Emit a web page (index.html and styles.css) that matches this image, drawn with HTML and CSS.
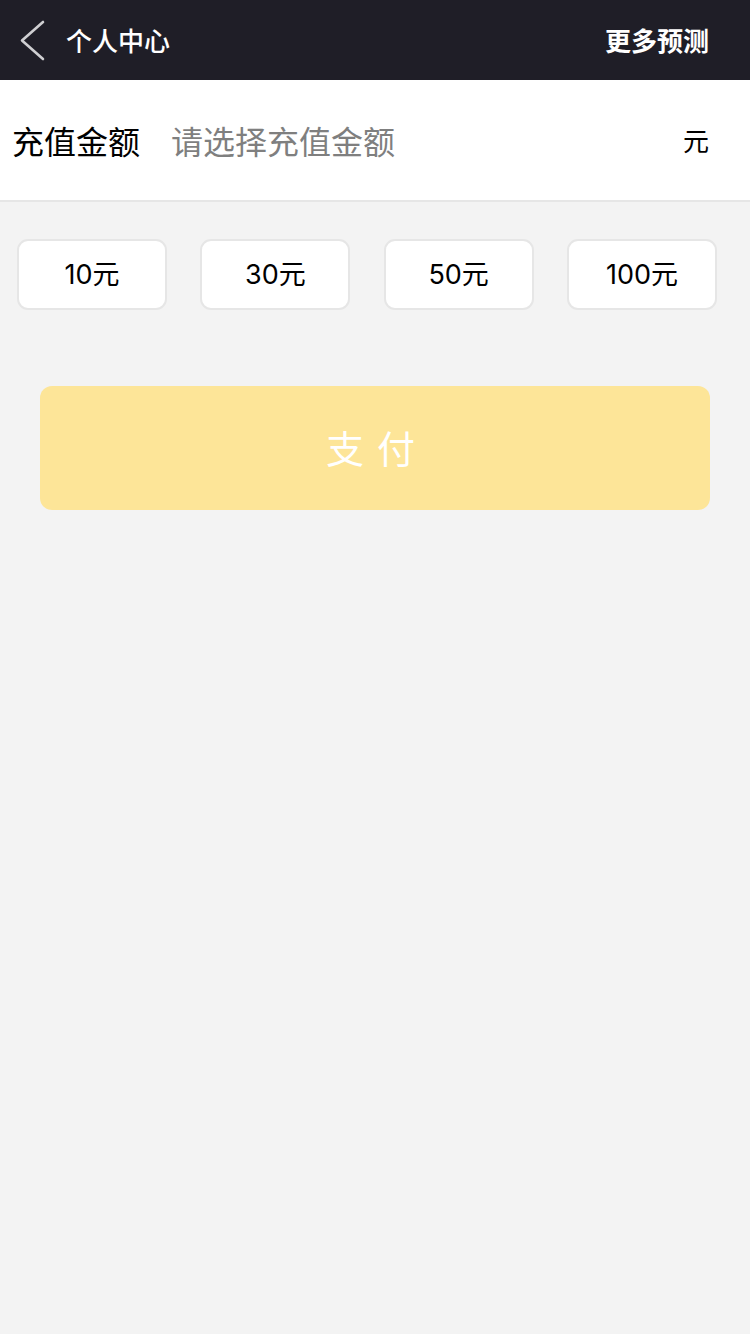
FILE: index.html
```html
<!DOCTYPE html>
<html lang="zh">
<head>
<meta charset="utf-8">
<title>充值</title>
<link rel="stylesheet" href="styles.css">
</head>
<body>
<header class="topbar">
  <div class="topbar-left">
    <svg class="back" width="30" height="44" viewBox="0 0 30 44"><polyline points="24,3 3,21.5 24,40" fill="none" stroke="#cfcfd2" stroke-width="2.6" stroke-linecap="round" stroke-linejoin="round"/></svg>
    <span class="title">个人中心</span>
  </div>
  <span class="more">更多预测</span>
</header>
<section class="amount-row">
  <span class="label">充值金额</span>
  <span class="placeholder">请选择充值金额</span>
  <span class="unit">元</span>
</section>
<section class="options">
  <div class="opt">10元</div>
  <div class="opt">30元</div>
  <div class="opt">50元</div>
  <div class="opt">100元</div>
</section>
<div class="pay-wrap">
  <div class="pay">支付</div>
</div>
</body>
</html>
```
FILE: styles.css
```css
* { box-sizing: border-box; }
html, body { margin: 0; padding: 0; }
body {
  width: 750px;
  height: 1334px;
  background: #f3f3f3;
  font-family: "Noto Sans CJK SC", "Noto Sans", sans-serif;
  overflow: hidden;
}
.topbar {
  height: 80px;
  background: #1f1e27;
  display: flex;
  align-items: center;
  justify-content: space-between;
  padding: 0 41px 0 19px;
  color: #fff;
}
.topbar-left { display: flex; align-items: center; }
.back { display: block; margin-right: 17px; margin-top: 1px; }
.title { font-size: 26px; font-weight: 500; line-height: 1; }
.more { font-size: 26px; font-weight: 700; line-height: 1; }
.amount-row {
  height: 122px;
  background: #fff;
  border-bottom: 2px solid #e6e6e6;
  display: flex;
  align-items: center;
  padding: 0 41px 0 12px;
}
.label { font-size: 32px; color: #000; line-height: 1; }
.placeholder { font-size: 32px; color: #7f7f7f; margin-left: 31px; line-height: 1; flex: 1; }
.unit { font-size: 26px; color: #000; line-height: 1; }
.options {
  display: grid;
  grid-template-columns: repeat(4, 150px);
  column-gap: 33.33px;
  padding: 37px 17px 0;
}
.opt {
  height: 71px;
  background: #fff;
  border: 2px solid #e6e6e6;
  border-radius: 11px;
  display: flex;
  align-items: center;
  justify-content: center;
  padding-bottom: 4px;
  font-size: 27px;
  color: #000;
  font-family: "Inter", "Noto Sans CJK SC", sans-serif;
}
.pay-wrap { padding: 76px 40px 0; }
.pay {
  height: 124px;
  background: #fde598;
  border-radius: 12px;
  display: flex;
  align-items: center;
  justify-content: center;
  padding-bottom: 3px;
  color: #fff;
  font-size: 38px;
  letter-spacing: 13px;
  padding-left: 4px;
}
```
